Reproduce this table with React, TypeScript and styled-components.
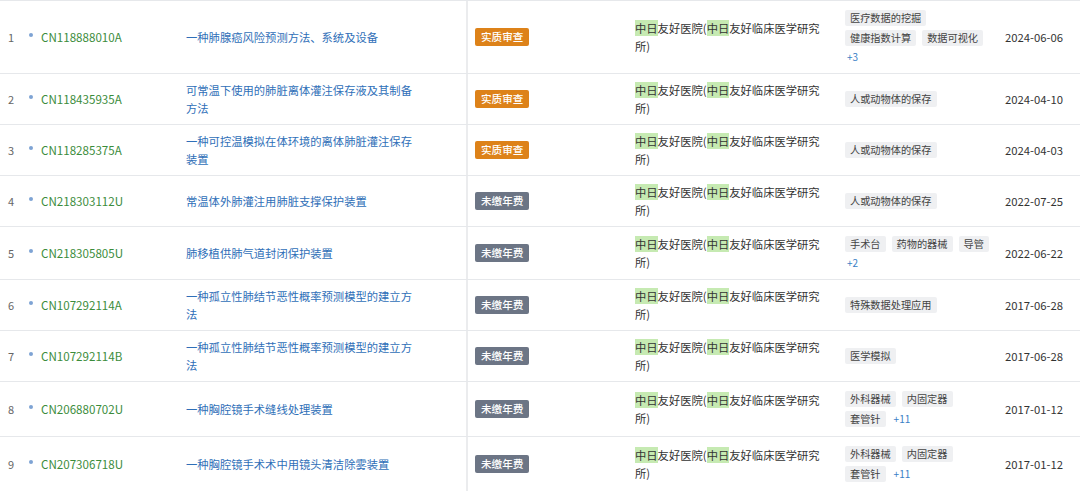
import React from "react"
import styled, { createGlobalStyle } from "styled-components"

const GlobalStyle = createGlobalStyle`
  html, body {
    margin: 0;
    padding: 0;
    background: #ffffff;
  }

  body {
    font-family: "Noto Sans CJK SC", "Noto Sans", sans-serif;
    font-size: 11.3px;
    color: #333333;
  }
`

type Status = "review" | "unpaid"

interface IPatent {
  number: string
  title: string
  status: Status
  tags: string[]
  more?: number
  date: string
}

const patents: IPatent[] = [
  {
    number: "CN118888010A",
    title: "一种肺腺癌风险预测方法、系统及设备",
    status: "review",
    tags: ["医疗数据的挖掘", "健康指数计算", "数据可视化"],
    more: 3,
    date: "2024-06-06",
  },
  {
    number: "CN118435935A",
    title: "可常温下使用的肺脏离体灌注保存液及其制备方法",
    status: "review",
    tags: ["人或动物体的保存"],
    date: "2024-04-10",
  },
  {
    number: "CN118285375A",
    title: "一种可控温模拟在体环境的离体肺脏灌注保存装置",
    status: "review",
    tags: ["人或动物体的保存"],
    date: "2024-04-03",
  },
  {
    number: "CN218303112U",
    title: "常温体外肺灌注用肺脏支撑保护装置",
    status: "unpaid",
    tags: ["人或动物体的保存"],
    date: "2022-07-25",
  },
  {
    number: "CN218305805U",
    title: "肺移植供肺气道封闭保护装置",
    status: "unpaid",
    tags: ["手术台", "药物的器械", "导管"],
    more: 2,
    date: "2022-06-22",
  },
  {
    number: "CN107292114A",
    title: "一种孤立性肺结节恶性概率预测模型的建立方法",
    status: "unpaid",
    tags: ["特殊数据处理应用"],
    date: "2017-06-28",
  },
  {
    number: "CN107292114B",
    title: "一种孤立性肺结节恶性概率预测模型的建立方法",
    status: "unpaid",
    tags: ["医学模拟"],
    date: "2017-06-28",
  },
  {
    number: "CN206880702U",
    title: "一种胸腔镜手术缝线处理装置",
    status: "unpaid",
    tags: ["外科器械", "内固定器", "套管针"],
    more: 11,
    date: "2017-01-12",
  },
  {
    number: "CN207306718U",
    title: "一种胸腔镜手术术中用镜头清洁除雾装置",
    status: "unpaid",
    tags: ["外科器械", "内固定器", "套管针"],
    more: 11,
    date: "2017-01-12",
  },
]

const statusLabel: Record<Status, string> = {
  review: "实质审查",
  unpaid: "未缴年费",
}

/**
 * Table
 */

const Table = styled.div`
  border-top: 1px solid #e6e8eb;
  display: flex;
  flex-direction: column;
`

const Row = styled.div`
  display: grid;
  grid-template-columns: 26px 160px 280px 169px 210px 160px 1fr;
  align-items: stretch;
  border-bottom: 1px solid #e6e8eb;
`

const Cell = styled.div`
  display: flex;
  align-items: center;
  padding: 7px 0;
  line-height: 18px;
`

const IndexCell = styled(Cell)`
  padding-left: 8px;
  color: #666666;
  font-size: 11px;
`

const NumberCell = styled(Cell)`
  gap: 8px;
  padding-left: 3px;
`

const Dot = styled.span`
  width: 4px;
  height: 4px;
  border-radius: 50%;
  background: #7ea3d4;
  flex: none;
  transform: translateY(-2px);
`

const PatentNumber = styled.span`
  color: #3b8c3b;
  font-size: 11.6px;
`

const TitleCell = styled(Cell)`
  & > span {
    width: 232px;
    color: #2f6fb8;
  }
`

const StatusCell = styled(Cell)`
  border-left: 2px solid #ebecee;
  padding-left: 7px;
`

const Badge = styled.span<{ $status: Status }>`
  display: inline-flex;
  align-items: center;
  height: 18px;
  padding: 0 6px;
  border-radius: 2px;
  font-size: 10.6px;
  font-weight: 500;
  color: #ffffff;
  background: ${(p) => (p.$status === "review" ? "#dd8219" : "#6c7585")};
`

const HolderCell = styled(Cell)`
  & > span {
    width: 190px;
  }
`

const Mark = styled.span`
  background: #c6eab2;
`

const TagsCell = styled(Cell)``

const TagList = styled.div`
  width: 146px;
  display: flex;
  flex-wrap: wrap;
  align-items: center;
  gap: 4px 6px;
  padding: 2px 0;
`

const Tag = styled.span`
  display: inline-flex;
  align-items: center;
  height: 16px;
  padding: 0 5px;
  border-radius: 2px;
  background: #eff0f2;
  color: #444444;
  font-size: 10.2px;
  line-height: 16px;
`

const More = styled.span`
  color: #3a7fc6;
  font-size: 10px;
  line-height: 14px;
  padding-left: 2px;
`

const DateCell = styled(Cell)`
  color: #333333;
`

const Holder = () => (
  <span>
    <Mark>中日</Mark>友好医院(<Mark>中日</Mark>友好临床医学研究所)
  </span>
)

export default function App() {
  return (
    <>
      <GlobalStyle />
      <Table>
        {patents.map((p, i) => (
          <Row key={p.number}>
            <IndexCell>{i + 1}</IndexCell>
            <NumberCell>
              <Dot />
              <PatentNumber>{p.number}</PatentNumber>
            </NumberCell>
            <TitleCell>
              <span>{p.title}</span>
            </TitleCell>
            <StatusCell>
              <Badge $status={p.status}>{statusLabel[p.status]}</Badge>
            </StatusCell>
            <HolderCell>
              <Holder />
            </HolderCell>
            <TagsCell>
              <TagList>
                {p.tags.map((t) => (
                  <Tag key={t}>{t}</Tag>
                ))}
                {p.more ? <More>+{p.more}</More> : null}
              </TagList>
            </TagsCell>
            <DateCell>{p.date}</DateCell>
          </Row>
        ))}
      </Table>
    </>
  )
}
